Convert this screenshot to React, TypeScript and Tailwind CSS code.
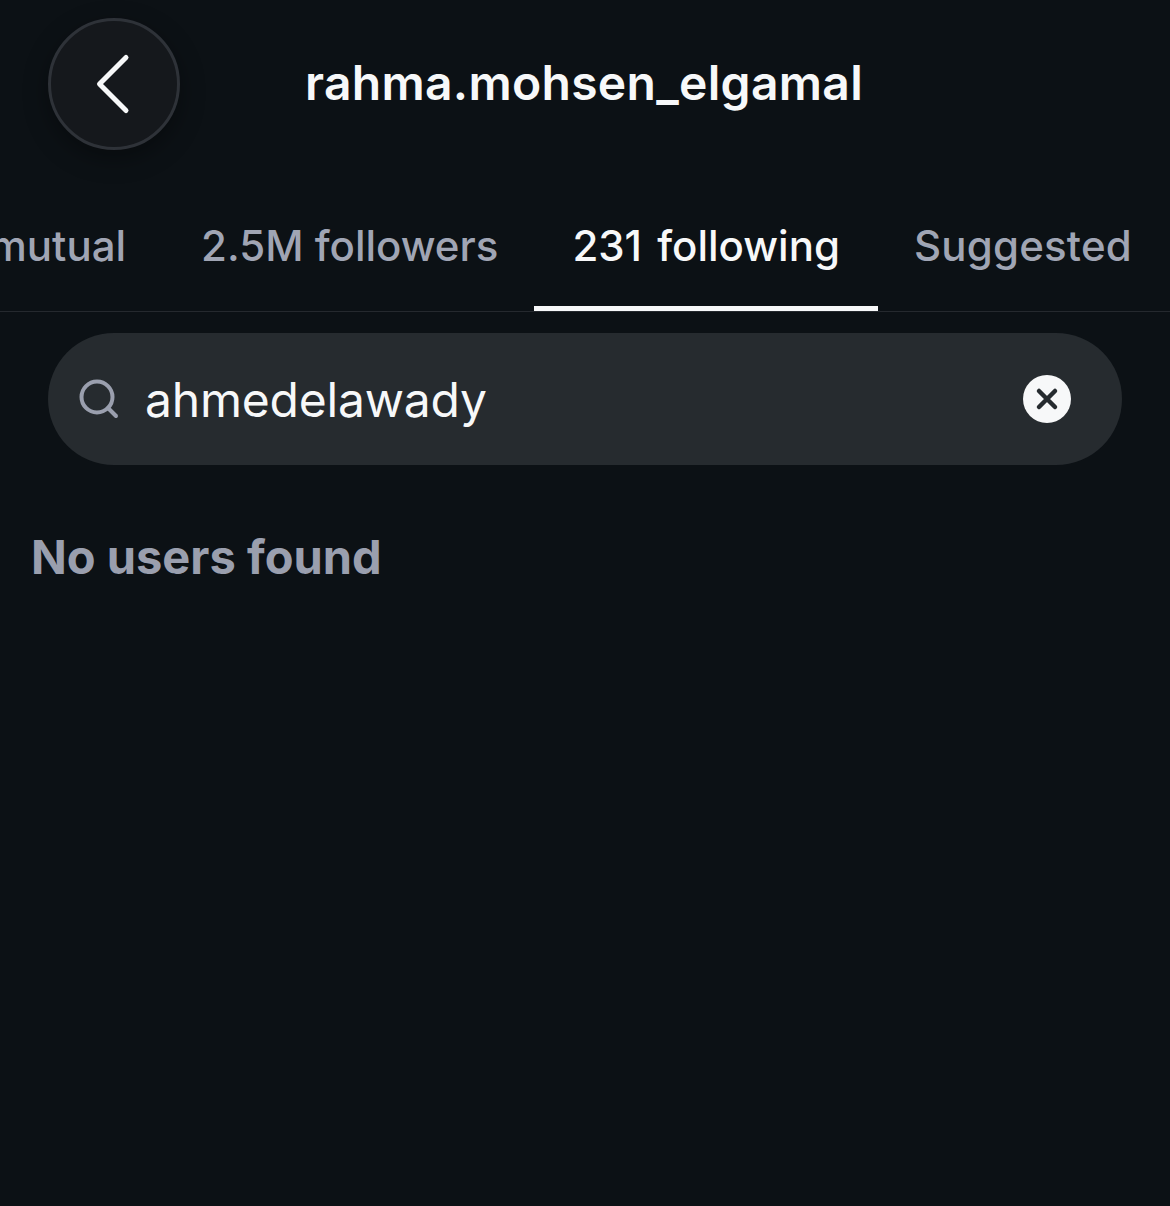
export default function App() {
  const font = { fontFamily: "Inter, 'Liberation Sans', sans-serif" };
  return (
    <div style={font} className="w-[1170px] h-[1206px] bg-[#0c1115] overflow-hidden flex flex-col">
      <header className="h-[168px] pt-[18px] pl-[48px] flex items-start shrink-0">
        <button className="w-[132px] h-[132px] rounded-full bg-[#15181c] border-[3px] border-[#2e3238] flex items-center justify-center shrink-0 shadow-[0_8px_24px_rgba(0,0,0,0.35)]">
          <svg width="60" height="70" viewBox="0 0 60 70" fill="none" className="shrink-0">
            <path d="M42 8.500 L15.500 35 L42 61.500" stroke="#f7f8f9" strokeWidth="5" strokeLinecap="round" strokeLinejoin="round" />
          </svg>
        </button>
        <h1 className="ml-[125px] mt-[35px] text-[48px] leading-[60px] font-semibold tracking-[0.3px] text-[#f7f8f9] whitespace-nowrap">rahma.mohsen_elgamal</h1>
      </header>
      <nav className="h-[144px] shrink-0 flex justify-end items-stretch border-b border-[#25292e] overflow-hidden text-[42px] font-medium text-[#a0a5b4] whitespace-nowrap">
        <div className="shrink-0 pl-[38px] pr-[37px] pt-[46px] leading-[64px]">mutual</div>
        <div className="shrink-0 pl-[38px] pr-[36px] pt-[46px] leading-[64px]">2.5M followers</div>
        <div className="shrink-0 px-[38px] pt-[46px] leading-[64px] text-[#f7f8f9] border-b-[5px] border-[#f7f8f9] [word-spacing:4px]">231 following</div>
        <div className="shrink-0 pl-[36px] pr-[38px] pt-[46px] leading-[64px] tracking-[0.2px]">Suggested</div>
      </nav>
      <div className="mt-[21px] mx-[48px] h-[131.5px] rounded-[66px] bg-[#262b2f] flex items-center pl-[30px] pr-[51px] shrink-0">
        <svg width="42" height="42" viewBox="0 0 42 42" fill="none" className="shrink-0">
          <circle cx="19" cy="19" r="15.500" stroke="#9a9fae" strokeWidth="4" />
          <path d="M30 30 L38 38" stroke="#9a9fae" strokeWidth="4" strokeLinecap="round" />
        </svg>
        <span className="ml-[25px] mt-[2px] text-[48px] leading-[60px] text-[#f7f8f9] flex-1 whitespace-nowrap tracking-[-0.2px]">ahmedelawady</span>
        <span className="w-[48px] h-[48px] rounded-full bg-[#f7f8f9] flex items-center justify-center shrink-0">
          <svg width="24" height="24" viewBox="0 0 24 24" fill="none">
            <path d="M4 4 L20 20 M20 4 L4 20" stroke="#262b2f" strokeWidth="4.500" strokeLinecap="round" />
          </svg>
        </span>
      </div>
      <p className="mt-[61.5px] ml-[31px] text-[47px] leading-[62px] font-bold text-[#9a9fae] whitespace-nowrap">No users found</p>
    </div>
  );
}
